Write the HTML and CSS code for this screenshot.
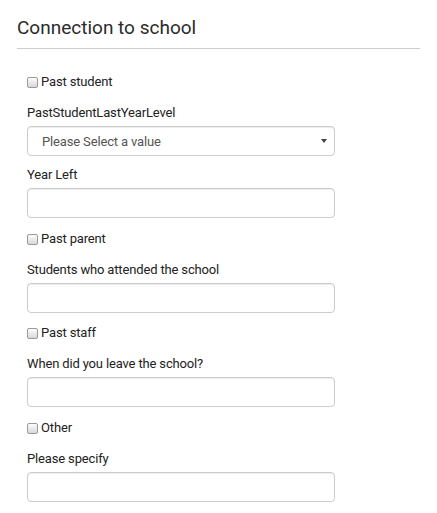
FILE: index.html
```html
<!DOCTYPE html>
<html lang="en">
<head>
<meta charset="utf-8">
<title>Connection to school</title>
<link rel="stylesheet" href="styles.css">
</head>
<body>
<section class="panel">
  <h2 class="panel-title">Connection to school</h2>
  <hr class="divider">
  <form class="form">
    <label class="check"><input type="checkbox" class="check-box"><span class="check-text">Past student</span></label>
    <div class="field field-first">
      <label class="field-label" for="lvl">PastStudentLastYearLevel</label>
      <div class="select-wrap">
        <select id="lvl" class="control select"><option>Please Select a value</option></select>
        <span class="select-arrow"></span>
      </div>
    </div>
    <div class="field">
      <label class="field-label" for="yl">Year Left</label>
      <input id="yl" class="control" type="text">
    </div>
    <label class="check"><input type="checkbox" class="check-box"><span class="check-text">Past parent</span></label>
    <div class="field">
      <label class="field-label" for="sa">Students who attended the school</label>
      <input id="sa" class="control" type="text">
    </div>
    <label class="check"><input type="checkbox" class="check-box"><span class="check-text">Past staff</span></label>
    <div class="field">
      <label class="field-label" for="wl">When did you leave the school?</label>
      <input id="wl" class="control" type="text">
    </div>
    <label class="check"><input type="checkbox" class="check-box"><span class="check-text">Other</span></label>
    <div class="field">
      <label class="field-label" for="ps">Please specify</label>
      <input id="ps" class="control" type="text">
    </div>
  </form>
</section>
</body>
</html>
```
FILE: styles.css
```css
* { box-sizing: border-box; }
html, body { margin: 0; padding: 0; background: #fff; }
body {
  font-family: Roboto, "Liberation Sans", Arial, sans-serif;
  font-size: 13px;
  line-height: 20px;
  color: #333;
}
.panel { padding: 0 17px; }
.panel-title {
  margin: 0;
  padding-top: 18px;
  font-size: 19px;
  line-height: 20px;
  font-weight: 400;
  color: #2b2b2b;
}
.divider {
  margin: 10px 0 0;
  border: 0;
  border-top: 1px solid #ccc;
  height: 0;
}
.form {
  padding: 23px 0 0 10px;
  display: flex;
  flex-direction: column;
  align-items: flex-start;
  letter-spacing: -0.15px;
}
.check {
  display: flex;
  align-items: center;
  height: 20px;
  margin-bottom: 11px;
  cursor: pointer;
}
.check-box {
  -webkit-appearance: none;
  appearance: none;
  width: 11px;
  height: 11px;
  margin: 1px 3px 0 0;
  border: 1px solid #9a9a9a;
  border-radius: 2px;
  background: linear-gradient(#fdfdfd, #d8d8d8);
}
.check-text { font-weight: 400; color: #222; }
.field {
  display: flex;
  flex-direction: column;
  margin-bottom: 10.5px;
}
.field-first { margin-bottom: 9px; }
.field-label {
  display: block;
  margin-bottom: 3px;
  line-height: 20px;
  color: #222;
}
.control {
  display: block;
  width: 308px;
  height: 30px;
  margin: 0;
  padding: 0 13px;
  border: 1px solid #ccc;
  border-radius: 4px;
  background: #fff;
  box-shadow: inset 0 1px 1px rgba(0,0,0,0.075);
  font-family: inherit;
  font-size: 13px;
  letter-spacing: -0.15px;
  color: #555;
  outline: none;
}
.select-wrap { position: relative; width: 308px; }
.select {
  -webkit-appearance: none;
  appearance: none;
  padding-left: 14px;
}
.select-arrow {
  position: absolute;
  right: 8px;
  top: 13px;
  width: 0;
  height: 0;
  border-left: 3px solid transparent;
  border-right: 3px solid transparent;
  border-top: 4px solid #444;
}
```
